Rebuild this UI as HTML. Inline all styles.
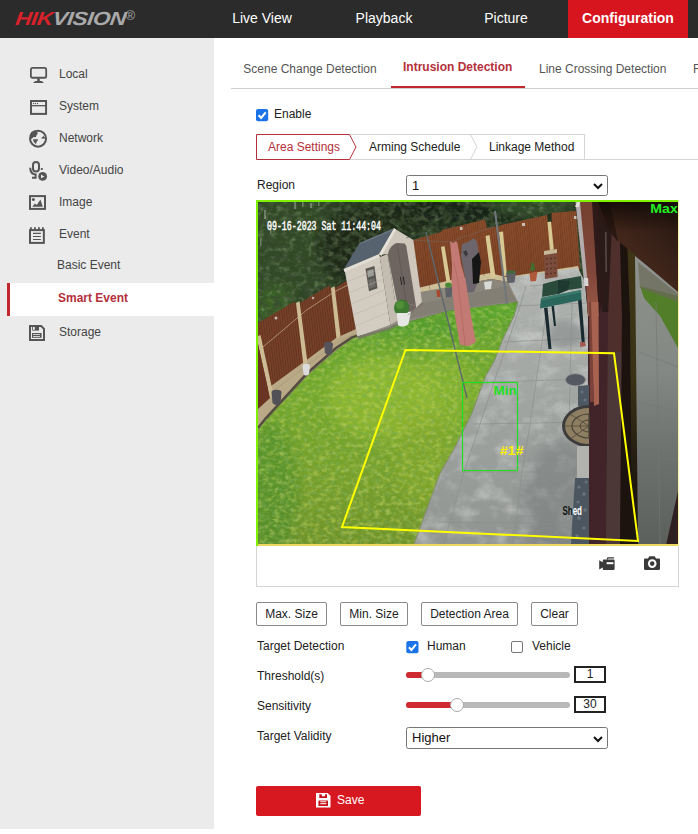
<!DOCTYPE html>
<html><head><meta charset="utf-8">
<style>
*{box-sizing:border-box;margin:0;padding:0}
html,body{width:698px;height:834px;overflow:hidden;background:#fff;font-family:"Liberation Sans",Arial,sans-serif;font-size:12px;color:#333}
#hdr{position:absolute;left:0;top:0;width:698px;height:38px;background:#2b2b2b}
#hdr .nav{position:absolute;top:0;height:38px;line-height:37px;color:#fff;font-size:14px;text-align:center}
#logo{position:absolute;left:13.5px;top:7px;font-size:19px;font-weight:bold;font-style:italic;letter-spacing:-0.5px;line-height:24px;white-space:nowrap}
#logo .r{color:#d7222a}#logo .g{color:#a9a9a9}
#lt{display:inline-block;transform-origin:0 100%;transform:scaleX(1.19) skewX(-6deg)}
#reg{position:absolute;left:125.5px;top:8px;font-size:13px;line-height:16px;color:#a9a9a9}
#side{position:absolute;left:0;top:38px;width:214px;height:791px;background:#ebebeb}
.mi{position:absolute;left:59px;font-size:12px;color:#444;line-height:14px;white-space:nowrap}
.ic{position:absolute;left:28px}
#main{position:absolute;left:214px;top:38px;width:484px;height:796px;background:#fff;overflow:hidden}
.abs{position:absolute;white-space:nowrap}
.btn{position:absolute;height:24px;border:1px solid #8a8a8a;border-radius:2px;background:#fff;font-size:12px;color:#222;text-align:center;line-height:22px}
.sel{border:1px solid #767676;border-radius:2.500px;background:#fff}
</style></head><body>
<div id="hdr">
 <div id="logo"><span id="lt"><span class="r">HIK</span><span class="g">VISION</span></span></div>
 <div id="reg">®</div>
 <div class="nav" style="left:214px;width:96px">Live View</div>
 <div class="nav" style="left:335px;width:98px">Playback</div>
 <div class="nav" style="left:458px;width:96px">Picture</div>
 <div class="nav" style="left:568px;width:120px;background:#d7151f;font-weight:bold">Configuration</div>
</div>
<div id="side">
 <svg class="ic" style="left:29px;top:28px" width="20" height="18" viewBox="0 0 20 18"><rect x="1.900" y="1.900" width="15.300" height="9.850" rx="1.600" fill="none" stroke="#555" stroke-width="1.800"/><rect x="8.200" y="12.400" width="2.600" height="3" fill="#555"/><path d="M6.200 14.900H12.800L15 17H4Z" fill="#555"/></svg>
 <svg class="ic" style="left:29px;top:61px" width="20" height="18" viewBox="0 0 20 18"><rect x="2" y="2" width="15.060" height="12.900" fill="none" stroke="#555" stroke-width="2"/><path d="M2 6.700h15" stroke="#555" stroke-width="1.300"/><circle cx="4.500" cy="4.500" r="0.700" fill="#555"/><circle cx="6.500" cy="4.500" r="0.700" fill="#555"/><circle cx="8.500" cy="4.500" r="0.700" fill="#555"/></svg>
 <svg class="ic" style="left:28px;top:91px" width="20" height="20" viewBox="0 0 20 20"><circle cx="10.040" cy="9.640" r="8" fill="none" stroke="#555" stroke-width="2"/><path d="M8 1.400L9.400 3.600L9.800 4.600L8.400 6.400L7.800 8.200L5.400 8L4 9.800L2 9.800L1.800 6L3.200 3.200L5.500 1.700Z" fill="#555"/><path d="M5.200 10.200H10L9.800 11.400L8.800 12.600L8 15L7.200 14.600L5.600 12.600L5.100 11Z" fill="#555"/><path d="M13.200 9L15.600 7L16.400 8.200L17.700 8.600V9.800L13.600 9.600Z" fill="#555"/></svg>
 <svg class="ic" style="left:28px;top:122px" width="22" height="22" viewBox="0 0 22 22"><rect x="5" y="2" width="6" height="9.400" rx="3" fill="none" stroke="#555" stroke-width="2"/><path d="M2.200 7.800C2.200 12 4.500 14.600 8.600 14.600M7.600 14.600V17.800M4 17.800H8.600" fill="none" stroke="#555" stroke-width="2"/><rect x="12.800" y="8.100" width="2" height="1.800" fill="#555"/><circle cx="14.650" cy="16.460" r="4.400" fill="#555"/><path d="M13 14.700V18.300L16.500 16.500Z" fill="#ebebeb"/></svg>
 <svg class="ic" style="left:28px;top:156px" width="20" height="17" viewBox="0 0 20 17"><rect x="2" y="2.100" width="15" height="12.800" fill="none" stroke="#555" stroke-width="2"/><path d="M4.400 12.800L6.800 9.600L8.800 11L12.400 5.400L14.800 12.800Z" fill="#555"/><circle cx="5.400" cy="5.400" r="1.500" fill="#555"/></svg>
 <svg class="ic" style="left:28px;top:187px" width="20" height="20" viewBox="0 0 20 20"><rect x="2" y="5.100" width="13.860" height="12.800" fill="none" stroke="#555" stroke-width="2"/><path d="M2.900 2.200v2.500M6.900 2.200v2.500M10.900 2.200v2.500M14.900 2.200v2.500" stroke="#555" stroke-width="1.800"/><path d="M5 8.400h7.850M5 11.500h7.850M5 14.500h7.850" stroke="#555" stroke-width="1.100"/></svg>
 <svg class="ic" style="left:29px;top:287px" width="16" height="16" viewBox="0 0 16 16"><path d="M1 1H12.200L15 3.800V15H1Z" fill="none" stroke="#555" stroke-width="2"/><rect x="3.200" y="1.500" width="6.800" height="4.100" fill="#555"/><rect x="4" y="2" width="1.800" height="2.800" fill="#ebebeb"/><rect x="3" y="8" width="9.600" height="4.800" fill="#555"/><rect x="4" y="9" width="7" height="0.800" fill="#ebebeb"/><rect x="4" y="11" width="7" height="0.800" fill="#ebebeb"/></svg>

 <div class="mi" style="top:29px">Local</div>
 <div class="mi" style="top:61px">System</div>
 <div class="mi" style="top:93px">Network</div>
 <div class="mi" style="top:125px">Video/Audio</div>
 <div class="mi" style="top:157px">Image</div>
 <div class="mi" style="top:189px">Event</div>
 <div class="mi" style="top:220px;left:57px">Basic Event</div>
 <div style="position:absolute;left:7px;top:245px;width:207px;height:33px;background:#fff;border-left:3px solid #c1272d"></div>
 <div class="mi" style="top:253px;left:58px;color:#b5303a;font-weight:bold">Smart Event</div>
 <div class="mi" style="top:287px">Storage</div>
</div>
<div id="main">
 <div class="abs" style="left:17px;top:50px;width:467px;height:1px;background:#d0d0d0"></div>
 <div class="abs" style="left:29.300px;top:24px;font-size:12px;color:#555">Scene Change Detection</div>
 <div class="abs" style="left:189px;top:22px;font-size:12px;color:#b5303a;font-weight:bold">Intrusion Detection</div>
 <div class="abs" style="left:177px;top:48px;width:134px;height:2px;background:#c1272d"></div>
 <div class="abs" style="left:325px;top:24px;font-size:12px;color:#555">Line Crossing Detection</div>
 <div class="abs" style="left:479px;top:24px;font-size:12px;color:#555">R</div>
 <svg class="abs" style="left:42px;top:71px" width="13" height="13" viewBox="0 0 13 13"><rect x="0" y="0" width="12.200" height="12.200" rx="2" fill="#1a73e8"/><path d="M2.600 6.300l2.500 2.700 4.600-5.600" fill="none" stroke="#fff" stroke-width="2"/></svg>
 <div class="abs" style="left:60px;top:69px;font-size:12px;color:#222">Enable</div>
 <svg class="abs" style="left:42px;top:96px" width="442" height="26" viewBox="0 0 442 26">
  <path d="M93.500 0.500H329" stroke="#d4d4d4" fill="none"/>
  <path d="M0 25.500H484" stroke="#d4d4d4" fill="none"/>
  <path d="M214.500 0.500L221 13L214.500 25.500" stroke="#d4d4d4" fill="none"/>
  <path d="M328.500 0.500V25.500" stroke="#d4d4d4" fill="none"/>
  <path d="M0.500 0.500H93.500L100 13L93.500 25.500H0.500Z" stroke="#b5303a" fill="#fff"/>
 </svg>
 <div class="abs" style="left:54px;top:102px;font-size:12px;color:#b5303a">Area Settings</div>
 <div class="abs" style="left:155px;top:102px;font-size:12px;color:#222">Arming Schedule</div>
 <div class="abs" style="left:275px;top:102px;font-size:12px;color:#222">Linkage Method</div>
 <div class="abs" style="left:43px;top:140px;font-size:12px;color:#222">Region</div>
 <div class="abs sel" style="left:192px;top:136.500px;width:202px;height:21px"><span style="position:absolute;left:5px;top:2px;font-size:13px;line-height:15px;color:#111">1</span><svg style="position:absolute;right:4px;top:7px" width="10" height="7" viewBox="0 0 10 7"><path d="M1 1l4 4 4-4" fill="none" stroke="#111" stroke-width="2"/></svg></div>
 <!--VIDEO-->
 <div class="abs" style="left:42px;top:162px;width:423px;height:387px;border:1px solid #d4d4d4;border-top:none"></div>
 <div class="abs" style="left:42px;top:162px;width:422px;height:346px;background:#7ef000"></div>
 <div class="abs" style="left:44px;top:506px;width:421px;height:2px;background:#ecd860"></div>
 <div class="abs" style="left:464px;top:164px;width:1px;height:344px;background:#fdf0a0"></div>
 <div id="vid" class="abs" style="left:44px;top:164px;width:420px;height:342px;background:#444;overflow:hidden">
<svg width="420" height="342" viewBox="0 0 420 342" style="position:absolute;left:0;top:0;display:block">
<defs>
 <filter id="fTree" x="0" y="0" width="100%" height="100%"><feTurbulence type="fractalNoise" baseFrequency="0.16 0.2" numOctaves="3" seed="3"/><feColorMatrix type="matrix" values="0 0 0 0 0.23  0 0 0 0 0.33  0 0 0 0 0.17  2.4 0 0 0 -1.1"/></filter>
 <filter id="fTree2" x="0" y="0" width="100%" height="100%"><feTurbulence type="fractalNoise" baseFrequency="0.13 0.17" numOctaves="3" seed="11"/><feColorMatrix type="matrix" values="0 0 0 0 0.04  0 0 0 0 0.07  0 0 0 0 0.03  0 2.6 0 0 -1.1"/></filter>
 <filter id="fLawn" x="0" y="0" width="100%" height="100%"><feTurbulence type="fractalNoise" baseFrequency="0.22 0.3" numOctaves="3" seed="7"/><feColorMatrix type="matrix" values="0 0 0 0 0.20  0 0 0 0 0.42  0 0 0 0 0.12  2.2 0 0 0 -0.95"/></filter>
 <filter id="fLawn2" x="0" y="0" width="100%" height="100%"><feTurbulence type="fractalNoise" baseFrequency="0.18 0.24" numOctaves="3" seed="21"/><feColorMatrix type="matrix" values="0 0 0 0 0.66  0 0 0 0 0.74  0 0 0 0 0.16  0 2.2 0 0 -0.95"/></filter>
 <filter id="fPath" x="0" y="0" width="100%" height="100%"><feTurbulence type="fractalNoise" baseFrequency="0.5" numOctaves="2" seed="5"/><feColorMatrix type="matrix" values="0 0 0 0 0.3  0 0 0 0 0.3  0 0 0 0 0.3  0.9 0 0 0 -0.32"/></filter>
 <filter id="fPath2" x="0" y="0" width="100%" height="100%"><feTurbulence type="fractalNoise" baseFrequency="0.05 0.07" numOctaves="3" seed="9"/><feColorMatrix type="matrix" values="0 0 0 0 0.80  0 0 0 0 0.82  0 0 0 0 0.80  2.2 0 0 0 -0.95"/></filter>
 <filter id="blur1"><feGaussianBlur stdDeviation="0.7"/></filter>
 <filter id="blur3"><feGaussianBlur stdDeviation="3"/></filter>
 <filter id="blur6"><feGaussianBlur stdDeviation="7"/></filter>
 <linearGradient id="gLawn" x1="0" y1="0" x2="0" y2="1"><stop offset="0" stop-color="#5a9e2c"/><stop offset="0.35" stop-color="#72a82a"/><stop offset="0.7" stop-color="#76a02a"/><stop offset="1" stop-color="#6f9228"/></linearGradient>
 <linearGradient id="gPath" x1="0" y1="0" x2="0" y2="1"><stop offset="0" stop-color="#b4b7b3"/><stop offset="0.5" stop-color="#a2a6a3"/><stop offset="1" stop-color="#909491"/></linearGradient>
 <linearGradient id="gFence" x1="0" y1="0" x2="0" y2="1"><stop offset="0" stop-color="#8a4e2c"/><stop offset="1" stop-color="#7e4428"/></linearGradient>
 <linearGradient id="gEave" x1="0.35" y1="0.75" x2="1" y2="0"><stop offset="0" stop-color="#47291c"/><stop offset="0.45" stop-color="#382118"/><stop offset="1" stop-color="#24160f"/></linearGradient>
 <linearGradient id="gWall" x1="0" y1="0" x2="0" y2="1"><stop offset="0" stop-color="#744030"/><stop offset="0.6" stop-color="#80463a"/><stop offset="1" stop-color="#9a5846"/></linearGradient>
 <linearGradient id="gOlive" x1="0" y1="0" x2="0" y2="1"><stop offset="0" stop-color="#3e3616"/><stop offset="0.45" stop-color="#3a3216"/><stop offset="0.8" stop-color="#1e1810"/><stop offset="1" stop-color="#1a1410"/></linearGradient>
 <linearGradient id="gTopDark" x1="0" y1="0" x2="0" y2="1"><stop offset="0" stop-color="#120a06" stop-opacity="0.85"/><stop offset="1" stop-color="#120a06" stop-opacity="0"/></linearGradient>
 <linearGradient id="gGlass" x1="0" y1="0" x2="0" y2="1"><stop offset="0" stop-color="#8e928c"/><stop offset="0.4" stop-color="#848884"/><stop offset="0.65" stop-color="#707470"/><stop offset="1" stop-color="#5c605c"/></linearGradient>
 <pattern id="pSlatL" width="2.400" height="10" patternUnits="userSpaceOnUse" patternTransform="rotate(-7)"><rect width="2.400" height="10" fill="none"/><rect x="0" width="0.900" height="10" fill="#3a1a0e" opacity="0.300"/></pattern>
 <pattern id="pSlatB" width="2.200" height="10" patternUnits="userSpaceOnUse" patternTransform="rotate(-6)"><rect x="0" width="0.800" height="10" fill="#4a220e" opacity="0.280"/></pattern>
 <clipPath id="cLawn"><path d="M0 228L8.300 218L49.600 173.600L78.800 147.900L94.300 136.700L100 134.700L140.700 122.500L190 109L260 100L256 114L244.400 138L237 157.600L227.300 174.700L213.800 211.400L196.700 245.600L182 271.300L178 282L156 342L0 342Z"/></clipPath>
 <clipPath id="cPath"><path d="M260 100L248 76L320 66L327 80L330 114L331 342L156 342L178 282L182 271.300L196.700 245.600L213.800 211.400L227.300 174.700L237 157.600L244.400 138L256 114Z"/></clipPath>
 <clipPath id="cTree"><path d="M0 0H330V70L155 95L88 78L0 125Z"/></clipPath>
</defs>
<!-- trees -->
<rect width="420" height="342" fill="#293b22"/>
<g clip-path="url(#cTree)">
 <ellipse cx="30" cy="40" rx="50" ry="60" fill="#324a28" filter="url(#blur6)"/>
 <ellipse cx="14" cy="105" rx="22" ry="24" fill="#3a6028" filter="url(#blur6)"/>
 <ellipse cx="95" cy="45" rx="35" ry="35" fill="#1a2616" filter="url(#blur6)"/>
 <ellipse cx="200" cy="8" rx="70" ry="16" fill="#162214" filter="url(#blur6)"/><ellipse cx="130" cy="20" rx="40" ry="20" fill="#1a2816" opacity="0.7" filter="url(#blur6)"/>
 <ellipse cx="270" cy="4" rx="40" ry="10" fill="#2e4a26" filter="url(#blur3)"/>
 <rect width="330" height="130" filter="url(#fTree)" opacity="0.600"/>
 <rect width="330" height="130" filter="url(#fTree2)" opacity="0.9"/>
 <g fill="#9aa89a" opacity="0.55" filter="url(#blur1)"><rect x="36" y="0" width="2" height="7"/><rect x="44" y="0" width="1.500" height="5"/><rect x="52" y="1" width="2" height="5"/><rect x="60" y="0" width="1.500" height="4"/><rect x="6" y="8" width="2" height="9"/><rect x="12" y="22" width="1.500" height="10"/><rect x="2" y="36" width="1.500" height="8"/></g>
</g>
<!-- back fence -->
<g>
 <path d="M155 38L183 30L184 28L227 17.600L229 26L242 24L243 23L289 13L293 11L318 9L322 68L248 78L162 89Z" fill="url(#gFence)"/>
 <path d="M155 38L183 30L184 28L227 17.600L229 26L242 24L243 23L289 13L293 11L318 9L322 68L248 78L162 89Z" fill="url(#pSlatB)"/>
 <path d="M289 12.500L293.500 10.500L293.800 20L290 20.500Z" fill="#22321c"/>
 <!-- concrete base -->
 <path d="M160 86L189 79L232 71L248 75L320 64L321 68L250 80L233 77L190 85L162 94Z" fill="#cdbf98"/>
 <!-- posts -->
 <path d="M183 45l3.500-1 6 36-4 1Z" fill="#d8c894"/>
 <path d="M227.500 34l4-1 6 42-4.500 1Z" fill="#d8c894"/>
 <path d="M241 30l4-0.500 4 44-4 1Z" fill="#d8c894"/>
 <path d="M289.500 20l3.500-0.500 3 30-4 0Z" fill="#d8c894"/>
 <g stroke="#6a3820" stroke-width="0.600" opacity="0.500"><path d="M196 27L203 80M208 23L215 77M219 20L226 74M258 20L262 75M270 17L274 73M302 11L305 67M311 10L314 66M165 36L172 88M175 33L181 85"/></g>
 <rect x="202" y="25" width="2.500" height="3" fill="#ddd" opacity="0.800"/><rect x="264" y="21" width="3" height="3" fill="#ddd" opacity="0.800"/><rect x="316" y="14" width="2.500" height="3" fill="#ddd" opacity="0.800"/>
</g>
<!-- left fence -->
<g>
 <path d="M0 121L36 99.700L39 102.800L71 83.500L74 87.600L89 78.500L100 82L100 130L78 137L50 158L13 185L0 196Z" fill="#764028"/><path d="M0 121L36 99.700L39 102.800L71 83.500L74 87.600L89 78.500L100 82L100 130L78 137L50 158L13 185L0 196Z" fill="url(#pSlatL)"/>
 <path d="M0 149.200L48.700 108L76 90L90 83" stroke="#b49478" stroke-width="1" fill="none" opacity="0.900"/>
 <!-- base -->
 <path d="M0 196L13 184L50 157L78 136L98 127L100 135L94.300 136.700L78.800 147.900L49.600 173.600L8.300 218L0 228Z" fill="#b9a986"/>
 <path d="M0 226L8 216L49 171.500L78 146L94 135.500L100 133.500" stroke="#4a4238" stroke-width="2.600" fill="none" opacity="0.900"/>
 <path d="M0 203L14 190L51 162L79 140.500L98 131" stroke="#a39270" stroke-width="0.700" fill="none" opacity="0.800"/>
 <!-- posts -->
 <path d="M38 101l3.500-2 8 62-4 3Z" fill="#cdbb94"/>
 <path d="M73 86l3.500-2 6 50-4 3Z" fill="#cdbb94"/>
 <path d="M0 134L2.500 133L15.500 193L12 196L0 142Z" fill="#cdbb94"/>
 <path d="M0 142L12 196L0 207Z" fill="#6a3422"/>
 <circle cx="18" cy="116" r="1.500" fill="#ddd" opacity="0.800"/><circle cx="55" cy="96" r="1.300" fill="#ddd" opacity="0.700"/>
</g>
<!-- patio -->
<path d="M133 122L163 98L162 90L190 85L233 77L250 80L262 100L190 109L140 123Z" fill="#8c877c"/>
<path d="M150 104L250 84L258 99L190 108L146 118Z" fill="#7e7a72" opacity="0.600"/>
<!-- path -->
<g clip-path="url(#cPath)">
 <rect x="150" y="60" width="190" height="290" fill="url(#gPath)"/>
 <rect x="150" y="60" width="190" height="290" filter="url(#fPath2)" opacity="0.450"/>
 <rect x="150" y="60" width="190" height="290" filter="url(#fPath)" opacity="0.550"/>
 <ellipse cx="307" cy="132" rx="18" ry="13" fill="#7e8486" opacity="0.450" filter="url(#blur3)"/>
 <ellipse cx="305" cy="300" rx="42" ry="62" fill="#6e7272" opacity="0.420" filter="url(#blur6)"/>
 <g stroke="#8a8e8c" stroke-width="0.800" fill="none" opacity="0.800">
  <path d="M268 84L262 104L250 140L236 180L222 222L206 270L192 320L186 342"/>
  <path d="M292 80L289 104L284 140L278 180L272 222L264 270L258 320L255 342"/>
  <path d="M314 76L314 104L313 140L312 180L311 222L309 270L308 320"/>
  <path d="M258 104L330 101M246 140L331 136M232 180L331 177M216 222L331 220M198 270L331 270M180 320L331 322M272 84L326 80"/>
 </g>
</g>
<!-- lawn -->
<g clip-path="url(#cLawn)">
 <rect x="0" y="95" width="270" height="250" fill="url(#gLawn)"/>
 <ellipse cx="125" cy="195" rx="55" ry="42" fill="#9cc032" opacity="0.600" filter="url(#blur6)"/><ellipse cx="185" cy="190" rx="30" ry="40" fill="#98bc30" opacity="0.450" filter="url(#blur6)"/>
 <ellipse cx="165" cy="255" rx="30" ry="50" fill="#8cac2c" opacity="0.450" filter="url(#blur6)"/>
 <ellipse cx="10" cy="290" rx="30" ry="70" fill="#4a8a2a" opacity="0.600" filter="url(#blur6)"/>
 <ellipse cx="160" cy="125" rx="70" ry="10" fill="#4e9a2a" opacity="0.600" filter="url(#blur3)"/>
 <ellipse cx="235" cy="110" rx="30" ry="8" fill="#58a82c" opacity="0.600" filter="url(#blur3)"/>
 <rect x="0" y="95" width="270" height="250" filter="url(#fLawn)" opacity="0.650"/>
 <rect x="0" y="95" width="270" height="250" filter="url(#fLawn2)" opacity="0.500"/>
</g>
<path d="M260 100L256 114L244.400 138L237 157.600L227.300 174.700L213.800 211.400L196.700 245.600L182 271.300L178 282L156 342" stroke="#8a9078" stroke-width="1.200" fill="none" opacity="0.700"/>
<!-- shed -->
<g>
 <path d="M121 53L136 26.200L155.300 38L164 100.200L158 106L140.500 120.500L129.600 52Z" fill="#cfc7bc"/>
 <path d="M86.800 69L121.800 55L132.700 125L99.300 134.500Z" fill="#d3ccc0"/>
 <path d="M121.800 55L129.600 52L140.500 120.500L132.700 125Z" fill="#c4bcb0"/>
 <path d="M130 52.500C131 45 136 41.500 139 41L146.800 41.500L148.300 44.200L158 104L139 98Z" fill="#6e6560"/>
 <path d="M130 52.500L139 98L140.500 120.500L158 106L158 104L139 98Z" fill="#6e6560"/>
 <path d="M139.500 45L149.500 109" stroke="#5a524e" stroke-width="0.700"/>
 <path d="M130 52.500L139.200 99L140.500 120.500" stroke="#5a524e" stroke-width="0.500" fill="none"/>
 <path d="M142.500 75l1.200 8M145.300 74.500l1.200 8" stroke="#2a2624" stroke-width="1"/>
 <path d="M86 66.700L101.600 41L136 26.200L121 52Z" fill="#56626e"/>
 <path d="M101.600 41L136 26.200L134 29L100.500 43Z" fill="#6e7a86" opacity="0.700"/>
 <path d="M85.500 67L121 52L122 55.200L86.500 70Z" fill="#e2ddd4"/>
 <path d="M121 52L136 26.200L138.200 27.500L123.500 54Z" fill="#e6e1d8"/>
 <path d="M107.500 66.700L116.400 64L119.500 86.200L111 89.300Z" fill="#5a5650"/>
 <path d="M109.200 68.800L115.300 67L116 73.500L110 75.500Z" fill="#9a9c96"/>
 <path d="M110.300 78L116.500 76L117.500 84.500L111.800 86.800Z" fill="#6e6c66"/>
 <g stroke="#bcb4a8" stroke-width="0.600" opacity="0.900"><path d="M88.500 80L123.500 66M90.500 91L125.500 77M92.500 102L127 88M95 113L129 99M97 124L131 110"/></g>
 <path d="M99.300 134.500L132.700 125L140.500 120.500L158 106L164 100.200L165 102L141 123L133 127.500L100 137Z" fill="#7a766c" opacity="0.700"/>
 <ellipse cx="144" cy="105" rx="7.200" ry="7.500" fill="#3e7430"/>
 <ellipse cx="142.500" cy="102.500" rx="4" ry="3.500" fill="#5c9640" opacity="0.700"/>
 <path d="M141.300 111.500L153 109.500L150.500 122C148 124.500 145 124.500 143.500 123Z" fill="#e8e8e6"/>
</g>
 <path d="M100 134.500L133 122.500L157 108L164 100L165 102L134 125L100 137Z" fill="#7a766c" opacity="0.700"/>
 <ellipse cx="143.500" cy="106" rx="7.500" ry="8" fill="#3e7a30"/>
 <ellipse cx="142" cy="103" rx="4" ry="4" fill="#5a9a3c" opacity="0.700"/>
 <path d="M138.500 111L150 111L148.500 123C146 125 142 125 140 123Z" fill="#e6e6e4"/>
</g>
<!-- house -->
<g>
 <path d="M317 0H420V342H331L330 114L327 80Z" fill="#46282a"/>
 <path d="M322 0L335 0L341 114L330 114L328 80Z" fill="url(#gWall)"/>
 <path d="M335 0L356 0L350 114L348 342L331 342L330 114L341 114Z" fill="#40242a"/>
 <path d="M334 0L341 0L344 100L341 114Z" fill="#2e1a18"/>
 <path d="M340.500 8L355 8L351 110L344 110Z" fill="#2a1a18"/>
 <path d="M347 30l1.500 0 0.500 40-1.500 0Z" fill="#8a8078" opacity="0.500"/>
 <path d="M355 0L361 0L364 114L362 342L348 342L350 114Z" fill="#4e2f2c"/>
 <path d="M350 150L364 150L362 342L348 342Z" fill="#4e393b" opacity="0.850"/>
 <path d="M361 0L372 30L379 100L380 342L362 342L364 114Z" fill="#1c120e"/>
 <path d="M369 36L378 55L380 120L380 342L374 342L372 114Z" fill="url(#gOlive)"/>
 <!-- glass -->
 <path d="M377 54L420 88V342H380Z" fill="url(#gGlass)"/>
 <path d="M382 84L420 94L420 146L402 114L386 96Z" fill="#527e2a"/>
 <path d="M380 60L420 92L420 100L382 86Z" fill="#6a6a58" opacity="0.700"/>
 <g stroke="#747874" stroke-width="0.800" opacity="0.800" fill="none"><path d="M381 150L420 165M381 200L420 210M381 252L420 258M398 100L402 342"/></g>
 <path d="M420 289L408.300 342H420Z" fill="#2e2020"/>
 <!-- eaves -->
 <path d="M350 0H420V90L358 37Z" fill="url(#gEave)"/>
 <path d="M336 0H352L360 40L344 20Z" fill="#2a1812"/><path d="M340 0H420V30H352Z" fill="url(#gTopDark)"/>
 <!-- downpipe -->
 <path d="M317.500 0L322 0L329.500 80L326 80Z" fill="#b4acac"/>
 <path d="M326 76L330 76L330.500 84L326.500 84Z" fill="#d8d4d4"/>
 <!-- salmon pipe -->
 <path d="M331.500 100L340.500 100L341 202L336 204Z" fill="#a86250"/>
 <path d="M331 100L333 100L336 200L332 200Z" fill="#7a4238"/>
 <path d="M319 0h3l-1 5h-4Z" fill="#ddd"/>
</g>
<!-- items -->
<g>
 <!-- brick pillar -->
 <path d="M286 49L299 47L299.500 75L287 77Z" fill="#7c4c3c"/>
 <path d="M286 49L299 47L299 51L286 53Z" fill="#c8b898"/>
 <g fill="#4a2a22" opacity="0.700"><circle cx="289" cy="57" r="1"/><circle cx="293" cy="56.500" r="1"/><circle cx="297" cy="56" r="1"/><circle cx="289" cy="62" r="1"/><circle cx="293" cy="61.500" r="1"/><circle cx="297" cy="61" r="1"/><circle cx="289" cy="67" r="1"/><circle cx="293" cy="66.500" r="1"/><circle cx="297" cy="66" r="1"/><circle cx="289" cy="72" r="1"/><circle cx="293" cy="71.500" r="1"/><circle cx="297" cy="71" r="1"/></g>
 <!-- pots at back -->
 <path d="M187 86l7.500-1-1 10-5.500 0.500Z" fill="#5e6066"/><ellipse cx="190.500" cy="83" rx="3.500" ry="2.500" fill="#4a8a34"/>
 <path d="M178.500 88l4 0 0 7-3.500 0Z" fill="#a8482c"/>
 <path d="M226 80l8-1-1 8-6 0.500Z" fill="#d8dad8"/>
 <path d="M248 71l10-1.500-1.500 11-7 0.500Z" fill="#5e6066"/><ellipse cx="253" cy="70" rx="4.500" ry="1.800" fill="#46683a"/>
 <path d="M271.500 71l8-1.500-1.500 9.500-5.500 0.500Z" fill="#b0583a"/><path d="M272 69l2-9 2 2 1 6Z" fill="#3e7030"/>
 <ellipse cx="211" cy="84" rx="5" ry="3" fill="#6e6a62"/>
 <!-- pots by left fence -->
 <path d="M66 142c0-3 9-3 9 0l-1 9c-2 2-5 2-7 0Z" fill="#54545a"/>
 <path d="M44.500 164c0-3 7.500-3 7.500 0l-1 8c-2 2-4 2-5.500 0Z" fill="#dcdcdc"/>
 <path d="M13.500 190c0-3 10-3 10 0l-1 11c-2 2.500-6 2.500-8 0Z" fill="#505056"/>
 <!-- table -->
 <path d="M286 106L289.500 105.500L293.500 147L290.500 147Z" fill="#182a30"/>
 <path d="M293.500 104L296 104L298 124L296 124Z" fill="#182a30"/>
 <path d="M320 98L323.500 97L327 143L324 144Z" fill="#182a30"/>
 <path d="M322 140l5 0 1 4-6 1Z" fill="#a05a50"/>
 <path d="M283 96L323 88L323.500 98L282 106.500Z" fill="#2a665c"/>
 <path d="M283 96L323 88L323 90.500L283 98.500Z" fill="#3a7a6c"/>
 <path d="M285 82L300 78L312 76L323 74L324 86L310 88L300 92L284 95Z" fill="#2a4a3c"/>
 <path d="M300 78L312 79L310 88L300 92Z" fill="#1e3a30"/>
 <!-- poles -->
 <path d="M168 30L209 196" stroke="#5c686c" stroke-width="1.400" fill="none"/>
 <path d="M168 30L148 36" stroke="#4a5458" stroke-width="0.700" fill="none" opacity="0.800"/>
 <path d="M237 9L249 102" stroke="#70767a" stroke-width="2" fill="none"/>
 <path d="M155 38L192 40L237 24" stroke="#707478" stroke-width="0.500" fill="none" opacity="0.700"/>
 <!-- clothes -->
 <path d="M204 42L210 40L216 36L219 40L222 58L220 80L216 90L208 91L207 75L203 55Z" fill="#6c666c"/>
 <path d="M214 57L221 50L223 60L221 81L215 82Z" fill="#161616"/>
 <path d="M205 50l3-2 2 4-2 3Z" fill="#3a3a3e"/>
 <path d="M192 39L195 41L198 39L199.500 41L203 62L208 80L213 114L218 140L211 144L202 143L197 114L193.500 80L194 62Z" fill="#c47a74"/>
 <path d="M196 60L200 80L204 114L207 143" stroke="#a8605c" stroke-width="0.800" fill="none" opacity="0.700"/>
 <!-- manhole, mat, gravel -->
 <ellipse cx="317.500" cy="177.800" rx="10" ry="6" fill="#545860"/>
 <ellipse cx="317.500" cy="177.800" rx="10" ry="6" fill="none" stroke="#8a8e8e" stroke-width="0.800"/>
 <path d="M320 184L331 183L331 206L320 204Z" fill="#4e5862"/>
 <path d="M331 203A27 21 0 0 0 331 245Z" fill="#3c3c3c"/>
 <path d="M331 206A24 18 0 0 0 331 242Z" fill="#8e7e62"/>
 <path d="M331 212A17 12 0 0 0 331 236Z" fill="none" stroke="#4a4438" stroke-width="1.200"/>
 <path d="M331 218A9 6 0 0 0 331 230Z" fill="none" stroke="#4a4438" stroke-width="1"/>
 <path d="M305 224H331M312 212L331 224L312 237" stroke="#4a4438" stroke-width="0.700" fill="none"/>
 <path d="M319 244L331 244L331 277L319 276Z" fill="#b2b2ae"/>
 <path d="M317 276L331 276L331 342L313 342Z" fill="#4c5660"/>
 <g fill="#6e7c88" opacity="0.800"><circle cx="321" cy="285" r="1.600"/><circle cx="326" cy="292" r="1.800"/><circle cx="320" cy="300" r="1.600"/><circle cx="327" cy="308" r="1.700"/><circle cx="321" cy="316" r="1.800"/><circle cx="326" cy="326" r="1.600"/><circle cx="319" cy="334" r="1.700"/><circle cx="328" cy="280" r="1.400"/><circle cx="324" cy="190" r="1.500"/><circle cx="327" cy="198" r="1.500"/></g>
</g>
<!-- overlay -->
<g font-family="'Liberation Sans',Arial,sans-serif">
 <path d="M147.500 148L356 151.300L380 339L84 325Z" fill="none" stroke="#ffff00" stroke-width="2"/>
 <rect x="204.500" y="180.500" width="55" height="88" fill="none" stroke="#22dd22" stroke-width="1.200"/>
 <text x="235.500" y="193" font-size="13.500" font-weight="bold" fill="#1fe01f">Min</text>
 <text x="392.300" y="11.300" font-size="13.500" font-weight="bold" fill="#22ee22" textLength="27.500" lengthAdjust="spacingAndGlyphs">Max</text>
 <text x="242" y="252.800" font-size="13.500" font-weight="bold" fill="#ffee00" textLength="23.500" lengthAdjust="spacingAndGlyphs">#1#</text>
 <text x="9" y="28" font-family="'Liberation Mono',monospace" font-size="12" fill="#fff" stroke="#fff" stroke-width="0.450" textLength="114" lengthAdjust="spacingAndGlyphs">09-16-2023 Sat 11:44:04</text>
 <text x="304.500" y="313.200" font-family="'Liberation Sans Narrow','Liberation Sans',sans-serif" font-size="12.500" font-weight="bold" textLength="19.500" lengthAdjust="spacingAndGlyphs"><tspan fill="#111">Sh</tspan><tspan fill="#fff">ed</tspan></text>
</g>
</svg>

 </div>
 <svg class="abs" style="left:384px;top:517px" width="19" height="17" viewBox="0 0 19 17"><path d="M1.200 5.200l3.600 2v-1.700c0-0.500 0.400-0.900 0.900-0.900h10c0.500 0 0.900 0.400 0.900 0.900v8.600c0 0.500-0.400 0.900-0.900 0.900h-10c-0.500 0-0.900-0.400-0.900-0.900v-1.700l-3.600 2Z" fill="#3a3a3a"/><path d="M8.500 4.600l1-2.400h6.500v1.300h-5.600l-0.500 1.100Z" fill="#3a3a3a"/><rect x="8.600" y="7.200" width="6.800" height="2" fill="#fff"/></svg>
 <svg class="abs" style="left:429px;top:517px" width="19" height="17" viewBox="0 0 19 17"><path d="M1 4.600c0-0.700 0.500-1.200 1.200-1.200h2.800l1.300-2.200h5.400l1.300 2.200h2.800c0.700 0 1.200 0.500 1.200 1.200v9.200c0 0.700-0.500 1.200-1.200 1.200h-13.600c-0.700 0-1.200-0.500-1.200-1.200Z" fill="#3a3a3a"/><circle cx="9.200" cy="8.600" r="4.300" fill="#fff"/><circle cx="9.200" cy="8.600" r="2.300" fill="#3a3a3a"/></svg>

 <div class="btn" style="left:42px;top:564px;width:71px">Max. Size</div>
 <div class="btn" style="left:126px;top:564px;width:68px">Min. Size</div>
 <div class="btn" style="left:207px;top:564px;width:97px">Detection Area</div>
 <div class="btn" style="left:317px;top:564px;width:47px">Clear</div>
 <div class="abs" style="left:43px;top:601px;font-size:12px;color:#222">Target Detection</div>
 <svg class="abs" style="left:192px;top:603px" width="13" height="13" viewBox="0 0 13 13"><rect x="0.300" y="0" width="12.200" height="12.200" rx="2" fill="#1a73e8"/><path d="M2.900 6.300l2.500 2.700 4.600-5.600" fill="none" stroke="#fff" stroke-width="2"/></svg>
 <div class="abs" style="left:213px;top:601px;font-size:12px;color:#222">Human</div>
 <div class="abs" style="left:297px;top:603px;width:12px;height:12px;border:1px solid #767676;border-radius:2px;background:#fff"></div>
 <div class="abs" style="left:318px;top:601px;font-size:12px;color:#222">Vehicle</div>
 <div class="abs" style="left:43px;top:631px;font-size:12px;color:#222">Threshold(s)</div>
 <div class="abs" style="left:192px;top:634px;width:164px;height:6px;border-radius:3px;background:#b8b8b8"></div>
 <div class="abs" style="left:192px;top:634px;width:24px;height:6px;border-radius:3px;background:#cf2a32"></div>
 <div class="abs" style="left:207px;top:630px;width:14px;height:14px;border-radius:7px;background:#fff;border:1px solid #aaa"></div>
 <div class="abs" style="left:360px;top:628px;width:32px;height:17px;border:2px solid #222;font-size:12px;line-height:13px;text-align:center;color:#222">1</div>
 <div class="abs" style="left:43px;top:661px;font-size:12px;color:#222">Sensitivity</div>
 <div class="abs" style="left:192px;top:664px;width:164px;height:6px;border-radius:3px;background:#b8b8b8"></div>
 <div class="abs" style="left:192px;top:664px;width:54px;height:6px;border-radius:3px;background:#cf2a32"></div>
 <div class="abs" style="left:236px;top:660px;width:14px;height:14px;border-radius:7px;background:#fff;border:1px solid #aaa"></div>
 <div class="abs" style="left:360px;top:658px;width:32px;height:17px;border:2px solid #222;font-size:12px;line-height:13px;text-align:center;color:#222">30</div>
 <div class="abs" style="left:43px;top:691px;font-size:12px;color:#222">Target Validity</div>
 <div class="abs sel" style="left:192px;top:689px;width:202px;height:22px"><span style="position:absolute;left:5px;top:2px;font-size:13px;line-height:16px;color:#111">Higher</span><svg style="position:absolute;right:4px;top:8px" width="10" height="7" viewBox="0 0 10 7"><path d="M1 1l4 4 4-4" fill="none" stroke="#111" stroke-width="2"/></svg></div>
 <div class="abs" style="left:42px;top:748px;width:165px;height:30px;background:#d71820;border-radius:2px"></div>
 <svg class="abs" style="left:101.800px;top:754.800px" width="15" height="15" viewBox="0 0 15 15"><path d="M0 0H11.500L14.500 2.800V14.400H0Z" fill="#fff"/><path d="M3.300 1.300H5.800V3.200H9.100V1.300H11V4.900H3.300Z" fill="#c4121a"/><rect x="2.400" y="7.400" width="9.600" height="5.500" rx="0.500" fill="#c4121a"/><rect x="4.300" y="8.300" width="6" height="0.900" fill="#fff"/><rect x="4.300" y="10.200" width="6" height="1" fill="#fff"/></svg>
 <div class="abs" style="left:123px;top:754px;font-size:12px;line-height:16px;color:#fff">Save</div>
</div>
</body></html>
